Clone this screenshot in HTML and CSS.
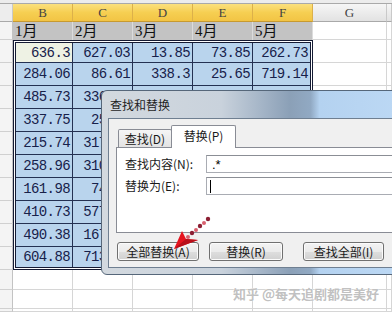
FILE: index.html
```html
<!DOCTYPE html>
<html>
<head>
<meta charset="utf-8">
<link rel="stylesheet" href="styles.css">
</head>
<body>
<div class="sheet">
  <div class="topbar"></div>
  <div class="ch corner"></div>
  <div class="ch sel">B</div><div class="ch sel">C</div><div class="ch sel">D</div><div class="ch sel">E</div><div class="ch sel">F</div>
  <div class="ch">G</div><div class="ch"></div>

  <div class="rh"></div>
  <div class="lbl">1月</div><div class="lbl">2月</div><div class="lbl">3月</div><div class="lbl">4月</div><div class="lbl">5月</div>
  <div class="c"></div><div class="c"></div>

  <div class="block">
    <div class="d act">636.3</div><div class="d">627.03</div><div class="d">13.85</div><div class="d">73.85</div><div class="d">262.73</div>
    <div class="d">284.06</div><div class="d">86.61</div><div class="d">338.3</div><div class="d">25.65</div><div class="d">719.14</div>
    <div class="d">485.73</div><div class="d">336.72</div><div class="d"></div><div class="d"></div><div class="d"></div>
    <div class="d">337.75</div><div class="d">25.48</div><div class="d"></div><div class="d"></div><div class="d"></div>
    <div class="d">215.74</div><div class="d">317.26</div><div class="d"></div><div class="d"></div><div class="d"></div>
    <div class="d">258.96</div><div class="d">310.57</div><div class="d"></div><div class="d"></div><div class="d"></div>
    <div class="d">161.98</div><div class="d">74.36</div><div class="d"></div><div class="d"></div><div class="d"></div>
    <div class="d">410.73</div><div class="d">577.21</div><div class="d"></div><div class="d"></div><div class="d"></div>
    <div class="d">490.38</div><div class="d">167.84</div><div class="d"></div><div class="d"></div><div class="d"></div>
    <div class="d">604.88</div><div class="d">713.45</div><div class="d"></div><div class="d"></div><div class="d"></div>
  </div>

  <div class="rh"></div><div class="c"></div><div class="c"></div>
  <div class="rh"></div><div class="c"></div><div class="c"></div>
  <div class="rh"></div><div class="c"></div><div class="c"></div>
  <div class="rh"></div><div class="c"></div><div class="c"></div>
  <div class="rh"></div><div class="c"></div><div class="c"></div>
  <div class="rh"></div><div class="c"></div><div class="c"></div>
  <div class="rh"></div><div class="c"></div><div class="c"></div>
  <div class="rh"></div><div class="c"></div><div class="c"></div>
  <div class="rh"></div><div class="c"></div><div class="c"></div>
  <div class="rh"></div><div class="c"></div><div class="c"></div>

  <div class="rh"></div><div class="c"></div><div class="c"></div><div class="c"></div><div class="c"></div><div class="c"></div><div class="c"></div><div class="c"></div>
  <div class="rh"></div><div class="c"></div><div class="c"></div><div class="c"></div><div class="c"></div><div class="c"></div><div class="c"></div><div class="c"></div>
  <div class="rh"></div><div class="c"></div><div class="c"></div><div class="c"></div><div class="c"></div><div class="c"></div><div class="c"></div><div class="c"></div>
</div>

<div class="dialog">
  <div class="title">查找和替换</div>
  <div class="body">
    <div class="tabs">
      <div class="tab">查找(D)</div>
      <div class="tab on">替换(P)</div>
    </div>
    <div class="panel">
      <div class="field"><span class="flabel">查找内容(N):</span><div class="input">.*</div></div>
      <div class="field"><span class="flabel">替换为(E):</span><div class="input empty"><span class="caret"></span></div></div>
    </div>
    <div class="buttons">
      <div class="btn b1">全部替换(A)</div>
      <div class="btn b2">替换(R)</div>
      <div class="btn b3">查找全部(I)</div>
    </div>
  </div>
</div>

<svg class="arrow" width="50" height="44" viewBox="0 0 50 44">
  <circle cx="43" cy="7" r="2.2" fill="#8c1f33"/>
  <circle cx="39" cy="11" r="2" fill="#d9606e"/>
  <circle cx="35" cy="14" r="2.2" fill="#8c1f33"/>
  <circle cx="31" cy="18" r="2" fill="#d9606e"/>
  <circle cx="27" cy="21" r="2.2" fill="#8c1f33"/>
  <circle cx="23" cy="25" r="2" fill="#d9606e"/>
  <polygon points="9,37 17,19 21,27 33,28" fill="#e5141f"/>
  <polygon points="9,37 21,27 33,28" fill="#b80f1a"/>
</svg>

<div class="watermark">知乎 @每天追剧都是美好</div>
</body>
</html>
```

FILE: styles.css
```css
* { box-sizing: border-box; }
html, body { margin: 0; padding: 0; }
body {
  width: 392px;
  height: 312px;
  overflow: hidden;
  position: relative;
  background: #fff;
  font-family: "Liberation Sans", "Noto Sans CJK SC", sans-serif;
}

.sheet {
  display: grid;
  grid-template-columns: 13px repeat(5, 60px) 74px 1fr;
  grid-template-rows: 4px 18px 18px repeat(10, 23px) 20px 19px 1fr;
  height: 312px;
}
.topbar {
  grid-column: 1 / -1;
  background: #ececec;
  border-bottom: 1px solid #a9a9a9;
}
.ch {
  background: linear-gradient(#f6f6f6, #e2e2e2);
  border-right: 1px solid #c9c9c9;
  border-bottom: 1px solid #a9a9a9;
  font: 13px "Liberation Serif", serif;
  color: #444;
  display: flex;
  align-items: center;
  justify-content: center;
}
.ch.sel {
  background: linear-gradient(#fbe07e, #f6cf52 50%, #f2c444);
  border-right-color: #dcb04a;
  border-bottom-color: #c79a30;
}
.ch.corner { background: #ededed; }
.rh {
  background: #f4f4f4;
  border-right: 1px solid #c3c3c3;
  border-bottom: 1px solid #d0d0d0;
}
.lbl {
  background: #c3c3c3;
  border-right: 1px solid #dcdcdc;
  font: 15px "Liberation Serif", "Noto Sans CJK SC", serif;
  color: #111;
  display: flex;
  align-items: center;
  padding-left: 2px;
  line-height: 1;
}
.c {
  border-right: 1px solid #d6d6d6;
  border-bottom: 1px solid #d6d6d6;
}

.block {
  grid-column: 2 / 7;
  grid-row: 4 / 14;
  border: 3px double #141a33;
  display: grid;
  grid-template-columns: 57px 60px 60px 60px 57px;
  grid-template-rows: 20px repeat(8, 23px) 20px;
}
.d {
  background: #b9d4ed;
  border-right: 1px solid #243152;
  border-bottom: 1px solid #243152;
  font: 14px "Liberation Mono", monospace;
  letter-spacing: -0.6px;
  color: #17214a;
  display: flex;
  align-items: center;
  justify-content: flex-end;
  padding-right: 2px;
}
.d:nth-child(5n) { border-right: none; }
.d:nth-child(n+46) { border-bottom: none; }
.d.act { background: #eef2e4; }

/* dialog */
.dialog {
  position: absolute;
  left: 101px;
  top: 90px;
  width: 300px;
  height: 185px;
  border: 1px solid #56677a;
  border-radius: 6px 0 0 6px;
  background: linear-gradient(90deg, #d3d9df 0%, #c9d2dc 40%, #a6b6c8 53%, #8ba0b7 63%, #91a9c3 70%, #b4d2f0 73%, #bcd8f4 100%);
  padding: 0 0 6px 6px;
  display: flex;
  flex-direction: column;
  font: 12px "Noto Sans CJK SC", sans-serif;
  color: #1a1a1a;
  z-index: 5;
}
.title {
  height: 27px;
  display: flex;
  align-items: center;
  padding-left: 2px;
  color: #1e1e1e;
}
.body {
  flex: 1;
  background: #f0f0f0;
  border: 1px solid #6f7f91;
  border-right: none;
  display: flex;
  flex-direction: column;
  padding: 6px 0 0 7px;
}
.tabs {
  display: flex;
  align-items: flex-end;
  padding-left: 2px;
  height: 23px;
  margin-bottom: -1px;
  position: relative;
  z-index: 1;
}
.tab {
  width: 54px;
  height: 18px;
  margin-bottom: 1px;
  border: 1px solid #898c95;
  border-bottom: none;
  border-radius: 2px 2px 0 0;
  background: linear-gradient(#f5f5f5, #e3e3e3);
  display: flex;
  align-items: center;
  justify-content: center;
  line-height: 1;
}
.tab.on {
  width: 65px;
  height: 23px;
  margin-bottom: 0;
  margin-left: -1px;
  background: #fff;
  padding-bottom: 2px;
}
.panel {
  height: 86px;
  background: #fff;
  border: 1px solid #898c95;
  border-right: none;
  padding: 7px 0 0 8px;
  display: flex;
  flex-direction: column;
  gap: 4px;
}
.field {
  display: flex;
  align-items: center;
  height: 18px;
}
.flabel {
  width: 81px;
  line-height: 1;
}
.input {
  flex: 1;
  height: 18px;
  border: 1px solid #a9acb3;
  border-top-color: #8b8e95;
  background: #fff;
  padding-left: 5px;
  display: flex;
  align-items: center;
  font: 13px "Liberation Sans", sans-serif;
  color: #000;
}
.input.empty { padding-left: 3px; }
.caret {
  width: 1px;
  height: 13px;
  background: #000;
}
.buttons {
  display: flex;
  margin-top: 9px;
  padding-left: 1px;
}
.btn {
  height: 19px;
  border: 1px solid #707070;
  border-radius: 3px;
  background: linear-gradient(#f3f3f3 0%, #ebebeb 50%, #dedede 51%, #d0d0d0 100%);
  box-shadow: inset 0 0 0 1px #fbfbfb;
  display: flex;
  align-items: center;
  justify-content: center;
  line-height: 1;
}
.b1 { width: 82px; }
.b2 { width: 74px; margin-left: 10px; }
.b3 { width: 81px; margin-left: 20px; }

.arrow {
  position: absolute;
  left: 165px;
  top: 212px;
  z-index: 6;
}
.watermark {
  position: absolute;
  left: 233px;
  top: 284px;
  font: bold 13px "Noto Sans CJK SC", sans-serif;
  color: rgba(140, 140, 140, 0.55);
  text-shadow: 0 0 1px #fff, 0 0 1px #fff;
  white-space: nowrap;
  z-index: 6;
}
```
